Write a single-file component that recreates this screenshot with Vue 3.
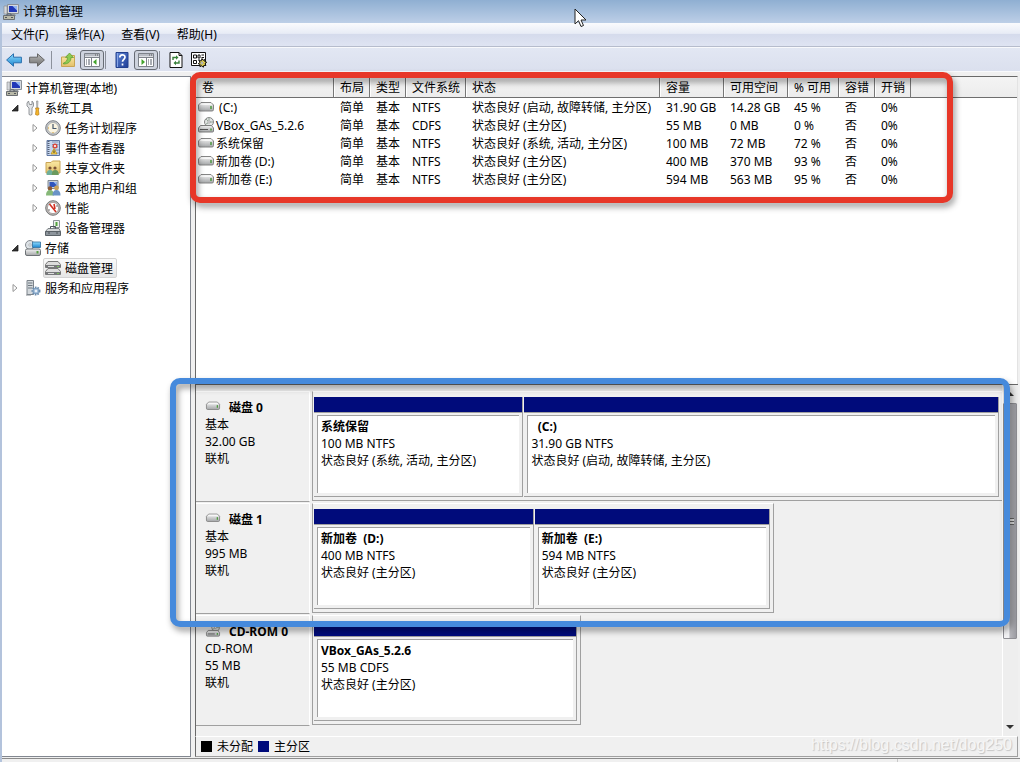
<script setup>
import { ref } from 'vue'

const menus = ['文件(F)', '操作(A)', '查看(V)', '帮助(H)']

const tools = [
  { icon: 'back', label: '后退' },
  { icon: 'forward', label: '前进', sep: true },
  { icon: 'up', label: '上一级' },
  { icon: 'tree', label: '显示/隐藏控制台树', framed: true, sep: true },
  { icon: 'help', label: '帮助' },
  { icon: 'actions', label: '显示/隐藏操作窗格', framed: true, sep: true },
  { icon: 'refresh', label: '刷新' },
  { icon: 'settings', label: '设置' },
]

const tree = [
  { text: '计算机管理(本地)', icon: 'computer', level: 0 },
  { text: '系统工具', icon: 'wrench', level: 1, arrow: 'open' },
  { text: '任务计划程序', icon: 'clock', level: 2, arrow: 'closed' },
  { text: '事件查看器', icon: 'events', level: 2, arrow: 'closed' },
  { text: '共享文件夹', icon: 'share', level: 2, arrow: 'closed' },
  { text: '本地用户和组', icon: 'users', level: 2, arrow: 'closed' },
  { text: '性能', icon: 'perf', level: 2, arrow: 'closed' },
  { text: '设备管理器', icon: 'device', level: 2 },
  { text: '存储', icon: 'storage', level: 1, arrow: 'open' },
  { text: '磁盘管理', icon: 'disks', level: 2 },
  { text: '服务和应用程序', icon: 'services', level: 1, arrow: 'closed' },
]
const selected = ref('磁盘管理')

const columns = ['卷', '布局', '类型', '文件系统', '状态', '容量', '可用空间', '% 可用', '容错', '开销']
const volumes = [
  { icon: 'drive', cells: ['\u00a0(C:)', '简单', '基本', 'NTFS', '状态良好 (启动, 故障转储, 主分区)', '31.90 GB', '14.28 GB', '45 %', '否', '0%'] },
  { icon: 'cdrom', cells: ['VBox_GAs_5.2.6', '简单', '基本', 'CDFS', '状态良好 (主分区)', '55 MB', '0 MB', '0 %', '否', '0%'] },
  { icon: 'drive', cells: ['系统保留', '简单', '基本', 'NTFS', '状态良好 (系统, 活动, 主分区)', '100 MB', '72 MB', '72 %', '否', '0%'] },
  { icon: 'drive', cells: ['新加卷 (D:)', '简单', '基本', 'NTFS', '状态良好 (主分区)', '400 MB', '370 MB', '93 %', '否', '0%'] },
  { icon: 'drive', cells: ['新加卷 (E:)', '简单', '基本', 'NTFS', '状态良好 (主分区)', '594 MB', '563 MB', '95 %', '否', '0%'] },
]

const disks = [
  {
    name: '磁盘 0', icon: 'drive', type: '基本', size: '32.00 GB', share: 100,
    parts: [
      { name: '系统保留', size: '100 MB NTFS', state: '状态良好 (系统, 活动, 主分区)', weight: 209 },
      { name: '\u00a0 (C:)', size: '31.90 GB NTFS', state: '状态良好 (启动, 故障转储, 主分区)', weight: 475 },
    ],
  },
  {
    name: '磁盘 1', icon: 'drive', type: '基本', size: '995 MB', share: 67,
    parts: [
      { name: '新加卷\u00a0 (D:)', size: '400 MB NTFS', state: '状态良好 (主分区)', weight: 220 },
      { name: '新加卷\u00a0 (E:)', size: '594 MB NTFS', state: '状态良好 (主分区)', weight: 236 },
    ],
  },
  {
    name: 'CD-ROM 0', icon: 'cdrom', type: 'CD-ROM', size: '55 MB', share: 39,
    parts: [
      { name: 'VBox_GAs_5.2.6', size: '55 MB CDFS', state: '状态良好 (主分区)', weight: 1 },
    ],
  },
]
</script>

<template>
  <div class="window">
    <svg class="sprite" aria-hidden="true">
      <defs>
        <linearGradient id="gMetal" x1="0" y1="0" x2="0" y2="1">
          <stop offset="0" stop-color="#f4f4f4" /><stop offset="1" stop-color="#a4a6a8" />
        </linearGradient>
        <linearGradient id="gBlue" x1="0" y1="0" x2="0" y2="1">
          <stop offset="0" stop-color="#8fdcff" /><stop offset="1" stop-color="#1c86cf" />
        </linearGradient>
        <linearGradient id="gGrey" x1="0" y1="0" x2="0" y2="1">
          <stop offset="0" stop-color="#b9b9b9" /><stop offset="1" stop-color="#6f6f6f" />
        </linearGradient>
        <linearGradient id="gFolder" x1="0" y1="0" x2="0" y2="1">
          <stop offset="0" stop-color="#fbe9a4" /><stop offset="1" stop-color="#e3c06a" />
        </linearGradient>
        <linearGradient id="gHelp" x1="0" y1="0" x2="1" y2="1">
          <stop offset="0" stop-color="#5f86d6" /><stop offset="1" stop-color="#1e3c96" />
        </linearGradient>
      </defs>
      <symbol id="back" viewBox="0 0 16 16">
        <path d="M.6 8 7.500 1.800v3.400h7.900v5.600H7.500v3.400z" fill="url(#gBlue)" stroke="#2a6fae" />
      </symbol>
      <symbol id="forward" viewBox="0 0 16 16">
        <path d="M15.400 8 8.500 1.800v3.400H.6v5.600h7.900v3.400z" fill="url(#gGrey)" stroke="#666" />
      </symbol>
      <symbol id="up" viewBox="0 0 16 16">
        <path d="M1.500 14.500V5h4L7 3.500h7.500v11z" fill="url(#gFolder)" stroke="#c9a455" />
        <path d="M3.500 11c2.500-.5 3.800-2.500 4-5.500H5.500L9.500 1l4 4.500H11C11 9.500 8.500 12 3.500 12z" fill="#8ccb52" stroke="#5a9a30" stroke-width=".7" />
      </symbol>
      <symbol id="tree" viewBox="0 0 16 16">
        <path d="M.5 1.500h15v13H.5z" fill="#fff" stroke="#7d828a" />
        <path d="M1 2h14v2.500H1z" fill="#b8bcc4" />
        <path d="M11 3h1m1 0h1" stroke="#555" />
        <path d="M1 5.500h14M7.500 5.500v9" stroke="#7d828a" />
        <path d="M2 8h1m1 0h2M2 10h1m1 0h2M2 12h1m1 0h2" stroke="#555c68" />
        <path d="M12.500 7v6L9 10z" fill="#43a32c" />
      </symbol>
      <symbol id="actions" viewBox="0 0 16 16">
        <path d="M.5 1.500h15v13H.5z" fill="#fff" stroke="#7d828a" />
        <path d="M1 2h14v2.500H1z" fill="#b8bcc4" />
        <path d="M11 3h1m1 0h1" stroke="#555" />
        <path d="M1 5.500h14M8.500 5.500v9" stroke="#7d828a" />
        <path d="M10 8h1m1 0h2M10 10h1m1 0h2M10 12h1m1 0h2" stroke="#555c68" />
        <path d="M3.500 7v6L7 10z" fill="#43a32c" />
      </symbol>
      <symbol id="help" viewBox="0 0 16 16">
        <path d="M2 .5h12v15H2z" fill="url(#gHelp)" stroke="#23408e" />
        <path d="M3.500 1v14" stroke="#87a5e6" />
        <path d="M5.800 5.500C5.800 2 11 2 11 5.300c0 2-2.500 2.300-2.500 4.500M8.500 11.500v2" fill="none" stroke="#fff" stroke-width="1.700" />
      </symbol>
      <symbol id="refresh" viewBox="0 0 16 16">
        <path d="M2 .5h9l3 3v12H2z" fill="#fff" stroke="#111" />
        <path d="M11 .5v3h3" fill="none" stroke="#111" />
        <path d="M5 8V5.500h3.500M11 8.500V11H7.500" fill="none" stroke="#37803a" stroke-width="1.400" />
        <path d="M8 3.300v4.400L10.500 5.500zM8 8.800v4.400L5.500 11z" fill="#37803a" />
      </symbol>
      <symbol id="settings" viewBox="0 0 16 16">
        <path d="M.5.5h14v13H.5z" fill="#fff" stroke="#111" />
        <path d="M2.500 3h3v3h-3zM2.500 8.500h3v3h-3z" fill="none" stroke="#111" />
        <path d="M7 3h2v3H7zM10.500 3h2.500M10.500 5.500h2.500M7 8h2" fill="none" stroke="#111" />
        <path d="m11 6.500 1 1.800 2-.8-.3 2 2 .8-1.700 1.200.9 2-2-.2-.6 2-1.400-1.600-2 1 .3-2.200-2-.8 1.800-1.200-.9-1.900 2.100.3z" fill="#f0dd54" stroke="#111" />
        <circle cx="11" cy="11" r="1.200" fill="#fff" stroke="#555" stroke-width=".6" />
      </symbol>
      <symbol id="computer" viewBox="0 0 16 16">
        <path d="M4.500.5h11v9h-11z" fill="#d5d9df" stroke="#8a9098" />
        <path d="M6 2h8v6H6z" fill="#2138b8" />
        <path d="M9.500 2H14v4.500z" fill="#8fb3f2" />
        <path d="M1 2h3v8H1z" fill="#d5d8dc" stroke="#888" stroke-width=".6" />
        <path d="M8 10h4l1 2H8z" fill="#8e949b" />
        <path d="M.5 11.500h11v4H.5z" fill="#b9b9a8" stroke="#6b6f73" />
        <path d="M4 11.500V10h4v1.500M2 13.500h2m4 0h2" fill="none" stroke="#53585d" />
      </symbol>
      <symbol id="wrench" viewBox="0 0 16 16">
        <path d="M3.500 1 2 3v3l2 2v6.500q1.500 1.300 3 0V8l1.500-2V3L7 1v3.500H4.500z" fill="#e2e4e6" stroke="#7d8286" stroke-width=".8" />
        <path d="M11.500 1h1.500l-.4 7h-.8z" fill="#ccc" stroke="#8a8a8a" stroke-width=".6" />
        <path d="M10.500 8h3.500l-.6 2 .6 4.500q-1.700 1.500-3.500 0l.6-4.500z" fill="#f4b52c" stroke="#b77b12" stroke-width=".7" />
      </symbol>
      <symbol id="clock" viewBox="0 0 16 16">
        <circle cx="8" cy="8" r="7.300" fill="#c8cbcf" stroke="#7a7e83" />
        <circle cx="8" cy="8" r="5.500" fill="#fbf5e2" stroke="#989ca0" stroke-width=".7" />
        <path d="M8 4v4.500h3.500" fill="none" stroke="#47586c" stroke-width="1.200" />
        <path d="M8 12v1M4 8H3" stroke="#d09a2a" />
      </symbol>
      <symbol id="events" viewBox="0 0 16 16">
        <path d="M2 .5h12.500v15H2z" fill="#c6d6ee" stroke="#6078a3" />
        <path d="M7 2h6.500M7 4.500h6.500M7 7h6M10 10h4M10 13h4" stroke="#8597b5" />
        <path d="M3.500 1v14" stroke="#536078" stroke-dasharray="1 1" stroke-width="2" />
        <circle cx="10" cy="6" r="2.500" fill="#d9483c" />
        <path d="m9 5 2 2m0-2L9 7" stroke="#fff" stroke-width=".8" />
        <path d="m9 8.500 3 5.500H6z" fill="#ffd84a" stroke="#ad8412" stroke-width=".7" />
        <path d="M9 10.500v2.500" stroke="#333" />
      </symbol>
      <symbol id="share" viewBox="0 0 16 16">
        <path d="M1 13V2.500h5L7.500 1H15v12z" fill="url(#gFolder)" stroke="#c9a455" />
        <circle cx="5" cy="8" r="1.600" fill="#7b5236" /><circle cx="10" cy="8" r="1.600" fill="#7b5236" />
        <path d="M1.500 15q0-5 3.500-5t3.500 5z" fill="#6fae9a" /><path d="M6.800 15q0-5 3.500-5t3.500 5z" fill="#6b9a5d" />
      </symbol>
      <symbol id="users" viewBox="0 0 16 16">
        <path d="M3 .5h10v8H3z" fill="#cad0d8" stroke="#7f8893" />
        <path d="M4.500 2h7v5h-7z" fill="#2f55bd" />
        <path d="M8.500 2h3v3z" fill="#93b9f4" />
        <circle cx="5" cy="8.500" r="2.200" fill="#8d5a36" /><circle cx="11.500" cy="8" r="2.400" fill="#c9a25c" />
        <path d="M1 15.500q0-5.500 4-5.500t4 5.500z" fill="#86b878" /><path d="M7.500 15.500q0-5.500 4-5.500t4 5.500z" fill="#6a93c6" />
      </symbol>
      <symbol id="perf" viewBox="0 0 16 16">
        <circle cx="8" cy="8" r="7.300" fill="#bcbcbc" stroke="#777" />
        <circle cx="8" cy="8" r="5.600" fill="#fff" stroke="#9a8b87" stroke-width=".7" />
        <path d="m4.500 4 6.500 8M9 4l1 5" stroke="#d13022" stroke-width="1.600" />
        <path d="M4 9v2M12 5v2" stroke="#777" />
      </symbol>
      <symbol id="device" viewBox="0 0 16 16">
        <path d="M8.500.5h6v7h-6z" fill="#eef2ee" stroke="#8b9297" />
        <path d="M11.500 2v4" stroke="#53a33e" stroke-width="2" />
        <path d="M3 8.500h11l1.500 3H.5z" fill="#d3d6d8" stroke="#7d8286" />
        <path d="M.5 11.500h15v4H.5z" fill="#8d959c" stroke="#5b6268" />
        <path d="M5.500 8.500v-2h5v2M4 12v2m8-2v2" fill="none" stroke="#4c5359" />
      </symbol>
      <symbol id="storage" viewBox="0 0 16 16">
        <circle cx="5" cy="5" r="4.500" fill="#dde2e6" stroke="#858b90" />
        <circle cx="5" cy="5" r="1.200" fill="#fff" stroke="#8d9296" stroke-width=".6" />
        <path d="M7.500 2h8v5.500h-8z" fill="url(#gBlue)" stroke="#2e6c9b" stroke-width=".8" />
        <rect x=".5" y="9" width="15" height="6.500" rx="1.500" fill="url(#gMetal)" stroke="#6d7276" />
        <path d="M11.500 11h2v2.500h-2z" fill="#58a044" />
      </symbol>
      <symbol id="disks" viewBox="0 0 16 16">
        <path d="M3 1.500h10l2.500 3v3H.5v-3z" fill="#dcdcdc" stroke="#777" />
        <path d="M1 5h14v3H1z" fill="#77797b" />
        <path d="M3 8.500h10l2.500 3v3H.5v-3z" fill="#dedede" stroke="#777" />
        <path d="M1 12h14v3H1z" fill="#77797b" />
        <path d="M3 6.500h6M3 13.500h6" stroke="#ddd" /><path d="M12 6.500h2m-2 7h2" stroke="#7cc35e" />
      </symbol>
      <symbol id="services" viewBox="0 0 16 16">
        <path d="M2 .5h6.500v14H2z" fill="#d3d8dc" stroke="#7c838a" />
        <path d="M3 3h4.500M3 5.500h4.500M3 8h4.500" stroke="#6f7880" />
        <path d="M1 15h5" stroke="#83898f" />
        <circle cx="11" cy="11" r="3.500" fill="#c4d8ee" stroke="#6a8cae" stroke-width="2" stroke-dasharray="1.500 1" />
        <circle cx="11" cy="11" r="2.800" fill="#a9c4e0" stroke="#6a8cae" stroke-width=".7" /><circle cx="11" cy="11" r="1" fill="#fff" />
      </symbol>
      <symbol id="drive" viewBox="0 0 16 16">
        <path d="M3 3.500h10l2.500 2.500v4.500q0 1.500-1.500 1.500H2Q.5 12 .5 10.500V6z" fill="url(#gMetal)" stroke="#858585" />
        <path d="M3.200 4.300h9.600L14.300 6H1.700z" fill="#f6f6f6" />
        <path d="M13 7v3" stroke="#4d9a3f" stroke-width="1.500" />
      </symbol>
      <symbol id="cdrom" viewBox="0 0 16 16">
        <circle cx="11" cy="5" r="4.500" fill="#e2e5e4" stroke="#858585" />
        <path d="M11 .5v3M8 2l2 2m5 1h-3M8 7l2-1" stroke="#95a698" />
        <circle cx="11" cy="5" r="1.200" fill="#fff" stroke="#888" stroke-width=".7" />
        <path d="M2.500 8.500h11l2 2.500v3q0 1-1 1h-13q-1 0-1-1v-3z" fill="url(#gMetal)" stroke="#7d7d7d" />
        <path d="M2 12.500h8" stroke="#555" /><path d="M13 11.500v2" stroke="#4d9a3f" stroke-width="1.500" />
      </symbol>
    </svg>

    <header class="titlebar">
      <svg class="icon"><use href="#computer" /></svg>
      <h1>计算机管理</h1>
    </header>

    <nav class="menubar">
      <button v-for="m in menus" :key="m" type="button">{{ m }}</button>
    </nav>

    <div class="toolbar">
      <template v-for="t in tools" :key="t.icon">
        <button type="button" :class="{ framed: t.framed }" :aria-label="t.label">
          <svg class="icon"><use :href="'#' + t.icon" /></svg>
        </button>
        <span v-if="t.sep" class="sep"></span>
      </template>
    </div>

    <main class="panes">
      <aside class="tree">
        <ul>
          <li v-for="n in tree" :key="n.text" :class="'level' + n.level">
            <span v-if="n.level" class="twisty">
              <svg v-if="n.arrow === 'open'" viewBox="0 0 8 8"><path d="M7 1v6H1z" fill="#333" stroke="#111" stroke-width=".7" /></svg>
              <svg v-else-if="n.arrow" viewBox="0 0 8 8"><path d="M2 .5 6 4 2 7.500z" fill="#fff" stroke="#969696" /></svg>
            </span>
            <button type="button" :class="{ selected: n.text === selected }" @click="selected = n.text">
              <svg class="icon"><use :href="'#' + n.icon" /></svg>
              <span>{{ n.text }}</span>
            </button>
          </li>
        </ul>
      </aside>

      <div class="content">
        <section class="volumes">
          <table>
            <colgroup>
              <col class="c-name"><col class="c-s"><col class="c-s"><col class="c-fs"><col class="c-state">
              <col class="c-m"><col class="c-m"><col class="c-pct"><col class="c-s"><col class="c-s"><col>
            </colgroup>
            <thead>
              <tr><th v-for="c in columns" :key="c" scope="col">{{ c }}</th><td class="filler"></td></tr>
            </thead>
            <tbody>
              <tr v-for="(v, i) in volumes" :key="i">
                <td v-for="(c, j) in v.cells" :key="j">
                  <span v-if="j === 0" class="name"><svg class="icon"><use :href="'#' + v.icon" /></svg>{{ c }}</span>
                  <template v-else>{{ c }}</template>
                </td>
                <td></td>
              </tr>
            </tbody>
          </table>
          <div class="mark red"></div>
        </section>

        <section class="graph">
          <div class="disks">
            <article v-for="d in disks" :key="d.name" class="disk">
              <div class="label">
                <h2><svg class="icon"><use :href="'#' + d.icon" /></svg>{{ d.name }}</h2>
                <p>{{ d.type }}</p>
                <p>{{ d.size }}</p>
                <p>联机</p>
              </div>
              <div class="track">
                <div class="parts" :class="{ partial: d.share < 100 }" :style="{ width: d.share + '%' }">
                  <div v-for="p in d.parts" :key="p.name" class="part" :style="{ flexGrow: p.weight }">
                    <div class="stripe"></div>
                    <div class="info">
                      <h3>{{ p.name }}</h3>
                      <p>{{ p.size }}</p>
                      <p>{{ p.state }}</p>
                    </div>
                  </div>
                </div>
              </div>
            </article>
          </div>
          <div class="scroll">
            <button type="button" aria-label="向上滚动"><svg viewBox="0 0 8 4"><path d="M0 4h8L4 0z" fill="#333" /></svg></button>
            <div class="thumb"><i></i></div>
            <button type="button" aria-label="向下滚动"><svg viewBox="0 0 8 4"><path d="M0 0h8L4 4z" fill="#333" /></svg></button>
          </div>
          <div class="mark blue"></div>
        </section>

        <footer class="legend">
          <span class="swatch black"></span><span>未分配</span>
          <span class="swatch navy"></span><span>主分区</span>
          <span class="watermark">https://blog.csdn.net/dog250</span>
        </footer>
      </div>
    </main>

    <div class="status"><span></span><span></span></div>

    <svg class="cursor" viewBox="0 0 13 20" aria-hidden="true">
      <path d="M1 1v15l3.500-3.300L7 18.500l2.500-1-2.500-5.500h5z" fill="#fff" stroke="#222" />
    </svg>
  </div>
</template>

<style>
html, body { margin: 0; background: #f0f0f0; }
</style>

<style scoped>
* { box-sizing: border-box; }
.window {
  position: relative;
  display: flex;
  flex-direction: column;
  min-height: 100vh;
  background: #f0f0f0;
  color: #000;
  font: 12px/17px "Noto Sans", "Noto Sans CJK SC", sans-serif;
  border-left: 2px solid #b3c3dc;
}
h1, h2, h3, p, ul { margin: 0; padding: 0; font-size: 12px; }
button {
  font: inherit;
  color: inherit;
  background: none;
  border: 0;
  padding: 0;
}
.sprite { position: absolute; width: 0; height: 0; }
.icon { width: 16px; height: 16px; flex: none; display: block; }

.titlebar {
  display: flex;
  align-items: center;
  gap: 4px;
  height: 23px;
  margin-left: -2px;
  padding-left: 3px;
  background: linear-gradient(#8fafd2, #bdcfe7);
}
.titlebar h1 { font-weight: 400; }
.menubar {
  display: flex;
  gap: 17px;
  height: 24px;
  padding-left: 9px;
  background: linear-gradient(#fafbfd, #e8ecf6 45%, #d5dbec 50%, #dfe4f2);
  border-bottom: 1px solid #b6bccc;
}
.toolbar {
  display: flex;
  align-items: center;
  height: 25px;
  padding-left: 4px;
  background: linear-gradient(#e2e7f3, #dbe0ee);
  border-top: 1px solid #f8f9fc;
  border-bottom: 1px solid #f8f9fc;
  gap: 7px;
}
.toolbar .framed {
  padding: 1px 3px;
  border: 1px solid #676c75;
  border-radius: 3px;
  background: #ced3de;
  margin: 0 -5px 0 -3px;
}
.sep { width: 1px; height: 18px; background: #8c919c; margin: 0 1px 0 -1px; }

.panes { flex: 1; display: flex; padding-top: 4px; min-height: 0; }
.tree {
  flex: none;
  width: 189px;
  background: #fff;
  border-top: 1px solid #828790;
  border-right: 1px solid #828790;
  border-bottom: 1px solid #828790;
}
.tree ul { list-style: none; padding-top: 1px; }
.tree li { display: flex; align-items: center; height: 20px; }
.tree li button {
  display: flex;
  align-items: center;
  gap: 4px;
  height: 20px;
  padding: 0 3px 0 1px;
  border: 1px solid transparent;
  border-radius: 2px;
}
.tree .level0 { padding-left: 2px; }
.tree .level1 { padding-left: 9px; }
.tree .level2 { padding-left: 29px; }
.twisty { width: 12px; flex: none; }
.twisty svg { width: 8px; height: 8px; display: block; }
.tree li button.selected {
  border-color: #d4d4d4;
  background: linear-gradient(#fafafa, #e6e6e6);
}

.content { flex: 1; min-width: 0; margin: 0 2px 0 4px; display: flex; flex-direction: column; }
.volumes {
  position: relative;
  flex: 1;
  min-height: 140px;
  background: #fff;
  border: 1px solid #696969;
  border-right-color: #e3e3e3;
  border-bottom: 0;
}
table { width: 100%; table-layout: fixed; border-collapse: separate; border-spacing: 0; }
.c-name { width: 138px; }
.c-s { width: 36px; }
.c-m { width: 64px; }
.c-fs { width: 60px; }
.c-state { width: 194px; }
.c-pct { width: 51px; }
th, td { padding: 0 0 0 6px; text-align: left; white-space: nowrap; font-weight: 400; }
th, .filler {
  height: 21px;
  padding-top: 1px;
  background: linear-gradient(#f4f4f4, #ececec);
  border-bottom: 1px solid #6e6e6e;
}
th { border-right: 1px solid #777; box-shadow: inset 1px 0 #fff; }
tbody td { height: 18px; }
tbody td:first-child { padding-left: 2px; }
.name { display: flex; align-items: center; gap: 2px; height: 18px; }

.mark { position: absolute; z-index: 2; pointer-events: none; border: 6px solid; border-radius: 10px; filter: drop-shadow(2px 4px 3px #0006); }
.red { left: -6px; top: -5px; width: 763px; height: 131px; border-color: #e73728; }
.blue { left: -26px; right: 8px; top: -7px; height: 249px; border-color: #468adc; }

.graph {
  position: relative;
  display: flex;
  border-top: 1px solid #696969;
  border-left: 1px solid #696969;
}
.disks { flex: 1; min-width: 0; padding: 6px 0 9px; }
.disk { display: flex; align-items: flex-start; gap: 2px; margin-bottom: 1px; }
.label {
  flex: none;
  width: 114px;
  height: 111px;
  padding: 7px 0 0 9px;
  border-top: 1px solid #fff;
  border-right: 1px solid #fff;
  border-bottom: 1px solid #a0a0a0;
}
.label h2 { display: flex; gap: 8px; }
.label h2 .icon { height: 14px; }
.track { flex: 1; min-width: 0; }
.parts {
  display: flex;
  gap: 1px;
  height: 110px;
  padding: 5px 3px 3px 1px;
  border-top: 1px solid #fff;
  border-left: 1px solid #a0a0a0;
  border-bottom: 1px solid #a0a0a0;
}
.partial { border-right: 1px solid #a0a0a0; }
.part {
  flex: 1 1 0;
  min-width: 0;
  display: flex;
  flex-direction: column;
  border-right: 1px solid #a0a0a0;
  border-bottom: 1px solid #a0a0a0;
}
.stripe { height: 16px; background: #000b7b; border-bottom: 1px solid #a0a0a0; }
.info {
  flex: 1;
  margin: 2px 3px 3px;
  padding: 2px 0 0 3px;
  background: #fff;
  border-top: 1px solid #a0a0a0;
  border-left: 1px solid #a0a0a0;
  white-space: nowrap;
  overflow: hidden;
}

.scroll {
  flex: none;
  width: 16px;
  padding: 0 1px 0 0;
  display: flex;
  flex-direction: column;
  border-left: 1px solid #fff;
  background: #eee;
}
.scroll button { height: 18px; display: grid; place-items: center; }
.scroll button svg { width: 8px; height: 4px; }
.scroll button:last-child { margin-top: auto; }
.thumb {
  height: 236px;
  display: grid;
  place-items: center;
  border: 1px solid #8f8f94;
  border-radius: 1px;
  background: linear-gradient(90deg, #f2f2f4 0 40%, #b5b5ba 50%, #9c9ca2);
}
.thumb i { width: 8px; height: 7px; background: repeating-linear-gradient(#666 0 1px, #ddd 1px 3px); }

.legend {
  position: relative;
  display: flex;
  align-items: center;
  gap: 5px;
  height: 21px;
  padding-left: 5px;
  border: 1px solid #a0a0a0;
  border-top-color: #fff;
  border-left-color: #696969;
}
.swatch { width: 11px; height: 11px; }
.black { background: #000; }
.navy { background: #000b7b; }
.watermark {
  margin-left: auto;
  padding: 0 5px 4px 0;
  font: 16px/17px "Liberation Sans", sans-serif;
  color: #f6f6f6;
  text-shadow: 1px 1px 1px #c4c4c4;
}
.status {
  display: flex;
  height: 4px;
  margin-top: 1px;
  border-top: 1px solid #8b8b8b;
}
.status span:first-child { flex: 0 0 88%; border-right: 1px solid #c8c8c8; }
.cursor { position: absolute; left: 572px; top: 8px; width: 13px; height: 20px; }
</style>
